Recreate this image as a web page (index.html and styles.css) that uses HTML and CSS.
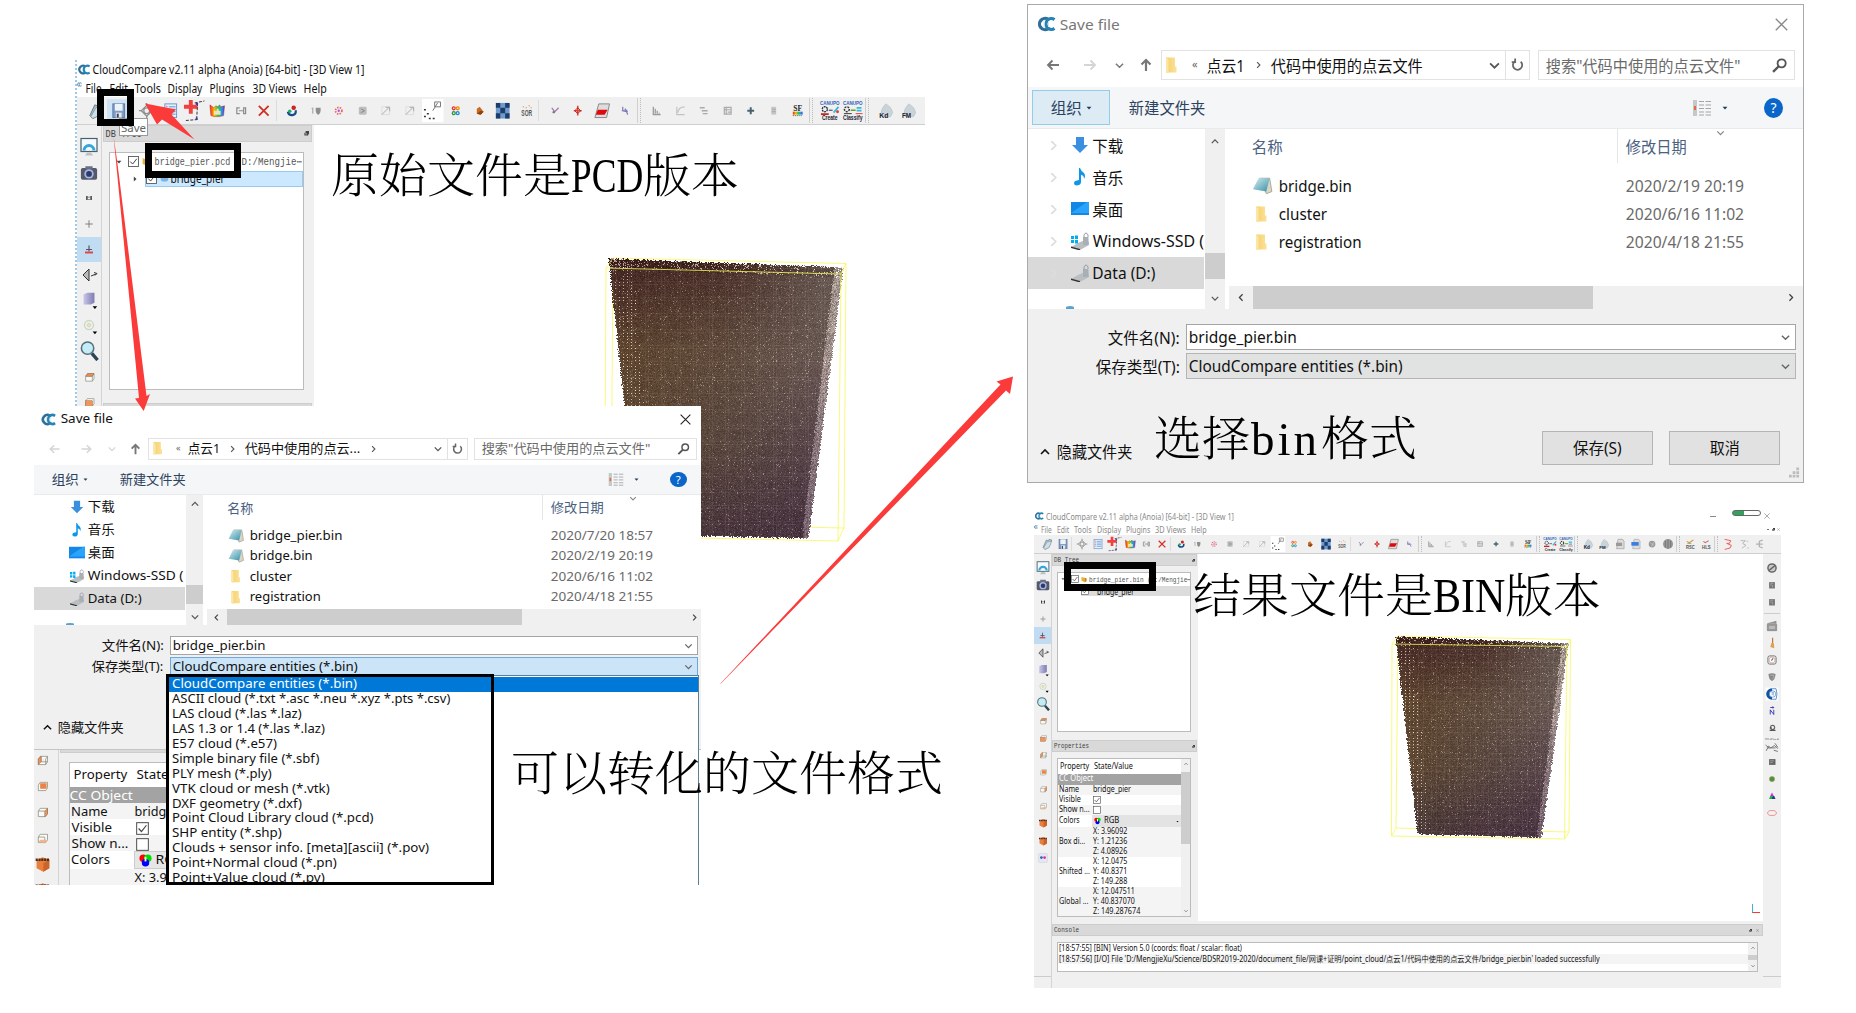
FILE: index.html
```html
<!DOCTYPE html>
<html lang="zh-CN">
<head>
<meta charset="utf-8">
<title>CloudCompare: PCD → BIN</title>
<link rel="stylesheet" href="styles.css">
</head>
<body>
<svg class="paints" aria-hidden="true">
  <defs>
    <linearGradient id="gTeal" x1="0" y1="0" x2="1" y2="1"><stop offset="0" stop-color="#d3eef2"/><stop offset="1" stop-color="#3a8fa5"/></linearGradient>
    <linearGradient id="gFold" x1="0" y1="0" x2="1" y2="0"><stop offset="0" stop-color="#f6d06a"/><stop offset="1" stop-color="#fbe29a"/></linearGradient>
    <linearGradient id="gRain" x1="0" y1="0" x2="1" y2="0"><stop offset="0" stop-color="#e22"/><stop offset=".3" stop-color="#fb0"/><stop offset=".55" stop-color="#2c4"/><stop offset=".8" stop-color="#29e"/><stop offset="1" stop-color="#63c"/></linearGradient>
    <linearGradient id="gCube" x1="0" y1="0" x2="1" y2="0"><stop offset="0" stop-color="#c9c6ea"/><stop offset="1" stop-color="#7f7bb0"/></linearGradient>
  </defs>
</svg>
<svg class="sprite" aria-hidden="true">
  <symbol id="cc" viewBox="0 0 18 16"><g fill="none" stroke-width="3.200"><path d="M10 3.200A5.600 5.600 0 1 0 10 12.800" stroke="#2f6f9a"/><path d="M16.500 3.600A5.400 5.400 0 1 0 16.500 12.400" stroke="#2583b5"/></g><path d="M6 4v8M10.500 5v6" stroke="#d5e8f2" stroke-width="1"/></symbol>
  <symbol id="open" viewBox="0 0 24 24"><path d="M6 17L11 6l3 1 1-2 4 1-4 11-6 3z" fill="#aebfc8" stroke="#69818e"/><path d="M7 18l5-9 7-1-4 9-6 3z" fill="#cfe0e8" stroke="#7b919c" stroke-width=".8"/></symbol>
  <symbol id="save" viewBox="0 0 24 24"><rect x="6" y="5" width="12" height="14" fill="#7f9cc2" stroke="#5c7ba6"/><rect x="8" y="5" width="8" height="7" fill="#eef3f9"/><rect x="9" y="14" width="6" height="5" fill="#e8eaee"/><rect x="10" y="15" width="2" height="4" fill="#445"/></symbol>
  <symbol id="gear" viewBox="0 0 24 24"><g fill="none" stroke="#8c8c8c" stroke-width="1.300"><path d="M12 6.500l5.500 5.500-5.500 5.500L6.500 12z"/><circle cx="12" cy="12" r="3"/><path d="M12 4v3M12 17v3M4 12h3M17 12h3"/></g></symbol>
  <symbol id="list" viewBox="0 0 24 24"><rect x="6" y="5" width="12" height="14" fill="#e7f1fb" stroke="#6b97cd"/><path d="M10 8h7M10 10.500h7M10 13h7M10 15.500h7" stroke="#5b8fd0"/><path d="M8 7v10" stroke="#d55" stroke-dasharray="1.500 1"/></symbol>
  <symbol id="plus" viewBox="0 0 24 24"><path d="M9 1v14M2 8h14" stroke="#f04040" stroke-width="4"/><path d="M13 4l10-2M16 4l-1 17M4 22l12-1" fill="none" stroke="#333" stroke-dasharray="3 1.500"/><rect x="14" y="4" width="2" height="2" fill="#33c"/><rect x="14" y="19" width="2" height="2" fill="#33c"/></symbol>
  <symbol id="rain" viewBox="0 0 24 24"><path d="M5 6l4 3 2-2 2 1 2-2 1 2 4-1-1 10-4 1H9l-3-1z" fill="url(#gRain)" stroke="#a33" stroke-width=".5"/><path d="M9 12h3v-2h2v2h2v4H9z" fill="#f3e2b8"/></symbol>
  <symbol id="link" viewBox="0 0 24 24"><path d="M11 9H8v6h3M10 12h5M15 9v6h2V9z" fill="none" stroke="#8a8a8a" stroke-width="1.200"/></symbol>
  <symbol id="del" viewBox="0 0 24 24"><path d="M7 7l10 10M17 7L7 17" stroke="#d03226" stroke-width="1.900"/></symbol>
  <symbol id="dots3" viewBox="0 0 24 24"><path d="M8 13q1 4 5 3.500 4-1 3-5" fill="none" stroke="#124a8a" stroke-width="2.200"/><circle cx="14" cy="9" r="2.300" fill="#c22"/><circle cx="10" cy="12.500" r="1.800" fill="#2a6"/></symbol>
  <symbol id="shield" viewBox="0 0 24 24"><path d="M9 9v6M8 10l1-1" stroke="#999" stroke-width="1"/><path d="M12 9h5v3q0 3-2.500 4.500Q12 15 12 12z" fill="#8e8e8e"/></symbol>
  <symbol id="spots" viewBox="0 0 24 24"><circle cx="12" cy="12" r="3.300" fill="none" stroke="#e66" stroke-width="1.800" stroke-dasharray="1.500 1.200"/><circle cx="12" cy="12" r="1.200" fill="#a5d"/></symbol>
  <symbol id="gbox" viewBox="0 0 24 24"><rect x="8" y="8" width="8" height="8" rx="1.500" fill="#bdbdbd"/><path d="M10 10l4 2-4 2" fill="none" stroke="#8a8a8a"/></symbol>
  <symbol id="garrow" viewBox="0 0 24 24"><rect x="8" y="8" width="8" height="8" fill="none" stroke="#dedede"/><path d="M8 16l7-7M12 8.500h4v4" fill="none" stroke="#aaa"/></symbol>
  <symbol id="seg" viewBox="0 0 24 24"><rect x="1" y="0" width="22" height="24" fill="#fff"/><path d="M12 12L17 4M14 3h6v5h-6z" fill="none" stroke="#777"/><path d="M3 11h2M6 15h2M3 18h2M8 20h2M12 20h2" stroke="#333" stroke-width="1.500"/></symbol>
  <symbol id="gccc" viewBox="0 0 24 24"><g fill="none" stroke-width="1.300"><circle cx="10" cy="9.500" r="1.500" stroke="#e33"/><circle cx="14" cy="9.500" r="1.500" stroke="#e80"/><circle cx="10" cy="14.500" r="1.500" stroke="#294"/><circle cx="14" cy="14.500" r="1.500" stroke="#28c"/></g></symbol>
  <symbol id="blob" viewBox="0 0 24 24"><path d="M9 15V10l3-2 4 5-3 3z" fill="#c96a1e"/><path d="M9 15l4-3 3 1-3 3z" fill="#8e430d"/></symbol>
  <symbol id="check" viewBox="0 0 24 24"><rect x="5" y="4" width="14" height="16" fill="#6f9ad0"/><path d="M5 4h4.500v5H5zM14.500 4H19v5h-4.500zM9.500 9h5v5.500h-5zM5 14.500h4.500V20H5zM14.500 14.500H19V20h-4.500z" fill="#1d3c66"/></symbol>
  <symbol id="fmtSor" viewBox="0 0 24 24"><text x="6.500" y="17.500" class="ic-bold ic-soft" textLength="11" lengthAdjust="spacingAndGlyphs" font-size="8.500">SOR</text><path d="M8 8h1M11 9h1M14 7h1M16 9h1" stroke="#d62"/></symbol>
  <symbol id="cut" viewBox="0 0 24 24"><path d="M9 9l3 4 4-4" fill="none" stroke="#a27db0" stroke-width="1.300"/><circle cx="11" cy="13.500" r="1.200" fill="#777"/></symbol>
  <symbol id="move" viewBox="0 0 24 24"><path d="M12 7v10M8 12h8" stroke="#d43" stroke-width="1.600"/><path d="M12 9l3 3-3 3-3-3z" fill="none" stroke="#b22"/></symbol>
  <symbol id="slab" viewBox="0 0 24 24"><path d="M9 5h11l-3 14H5z" fill="#ddd" stroke="#888"/><path d="M8 11h10l-3 5H6z" fill="#e00808"/></symbol>
  <symbol id="trace" viewBox="0 0 24 24"><path d="M10 8v4l4 1 1 3M9 12h4M12 10l3 3" fill="none" stroke="#7878b8" stroke-width="1.200"/></symbol>
  <symbol id="hist" viewBox="0 0 24 24"><path d="M8.500 8v8h7.500M10.500 15v-5M12.500 15v-3M14.500 15v-1" fill="none" stroke="#999" stroke-width="1.300"/></symbol>
  <symbol id="curve" viewBox="0 0 24 24"><path d="M8 8v8h8M9 14q1-6 7-6" fill="none" stroke="#c2c2c2" stroke-width="1.200"/></symbol>
  <symbol id="eq" viewBox="0 0 24 24"><path d="M8 9h5M10 12h6M11 15h5" stroke="#aaa" stroke-width="1.400"/></symbol>
  <symbol id="grid" viewBox="0 0 24 24"><path d="M8.500 8.500h7v7h-7zM8 11h8M10.500 8v8M12 13.500h4" fill="none" stroke="#aaa" stroke-width="1.200"/></symbol>
  <symbol id="pl" viewBox="0 0 24 24"><path d="M12 8.500v7M8.500 12h7" stroke="#45616e" stroke-width="2"/></symbol>
  <symbol id="calc" viewBox="0 0 24 24"><rect x="9.500" y="8" width="5" height="8" fill="#c6c6c6"/><path d="M10 10.500h4M10 13h4" stroke="#aaa"/></symbol>
  <symbol id="sf" viewBox="0 0 24 24"><text x="7.500" y="12" class="ic-serif" textLength="9" lengthAdjust="spacingAndGlyphs" font-size="8">SF</text><rect x="7" y="13" width="10" height="3" fill="url(#gRain)"/><path d="M7 17h10" stroke="#555" stroke-dasharray="1 1"/></symbol>
  <symbol id="canC" viewBox="0 0 24 24"><text x="2" y="6" class="ic-blue" textLength="20" lengthAdjust="spacingAndGlyphs" font-size="5.500">CANUPO</text><circle cx="7" cy="10.500" r="2.600" fill="none" stroke="#234" stroke-width="1.400" stroke-dasharray="2 .7"/><path d="M3 15.500h8" stroke="#c22" stroke-width="2"/><path d="M11 11.500h4" stroke="#234"/><path d="M16 14l5-6" stroke="#3bd" stroke-width="1.800"/><circle cx="20" cy="13" r="1.500" fill="#e33"/><text x="4" y="22" class="ic-bold" textLength="16" lengthAdjust="spacingAndGlyphs" font-size="6.500">Create</text></symbol>
  <symbol id="canY" viewBox="0 0 24 24"><text x="2" y="6" class="ic-blue" textLength="20" lengthAdjust="spacingAndGlyphs" font-size="5.500">CANUPO</text><circle cx="6" cy="10.500" r="2.500" fill="none" stroke="#333" stroke-width="1.500" stroke-dasharray="2 1"/><path d="M3 15h8" stroke="#333"/><path d="M10 11.500h5" stroke="#5a2" stroke-width="1.500"/><path d="M16 9h5M16 12h5" stroke="#3bd" stroke-width="1.800"/><path d="M15 15h7" stroke="#e33"/><text x="2" y="22" class="ic-bold" textLength="20" lengthAdjust="spacingAndGlyphs" font-size="6.500">Classify</text></symbol>
  <symbol id="kd" viewBox="0 0 24 24"><path d="M7 16q0-6 5-11 6 3 7 9l-2 4H9z" fill="#c9d4d8" stroke="#b4c0c5" stroke-width=".7"/><text x="5.500" y="19" class="ic-bold" font-size="7">Kd</text></symbol>
  <symbol id="fm" viewBox="0 0 24 24"><path d="M7 16q0-6 5-11 6 3 7 9l-2 4H9z" fill="#c9d4d8" stroke="#b4c0c5" stroke-width=".7"/><text x="5" y="19" class="ic-bold" font-size="6.500">FM</text></symbol>
  <symbol id="docg" viewBox="0 0 24 24"><path d="M9 5h7l2 3v11H7z" fill="#ddd" stroke="#999"/><rect x="6" y="10" width="9" height="5" fill="#999"/></symbol>
  <symbol id="docb" viewBox="0 0 24 24"><path d="M9 5h7l2 3v11H7z" fill="#ddd" stroke="#aaa"/><rect x="5" y="9" width="11" height="5.500" fill="#3a7fe0"/></symbol>
  <symbol id="ball" viewBox="0 0 24 24"><circle cx="12" cy="12" r="5" fill="#9a9a9a"/><path d="M9 10l6 4M15 9l-4 7" stroke="#ccc"/></symbol>
  <symbol id="globe" viewBox="0 0 24 24"><circle cx="12" cy="12" r="7.500" fill="#999"/><path d="M12 5v14M8 7v10M16 7v10" stroke="#666"/></symbol>
  <symbol id="rc" viewBox="0 0 24 24"><text x="6" y="19" class="ic-bold ic-soft" font-size="9" textLength="13" lengthAdjust="spacingAndGlyphs">RSC</text><path d="M7 8l4 2 6-4" fill="none" stroke="#e83" stroke-width="1.500"/><path d="M8 11h6" stroke="#3a4"/></symbol>
  <symbol id="rl" viewBox="0 0 24 24"><text x="6" y="19" class="ic-bold ic-soft" font-size="9" textLength="13" lengthAdjust="spacingAndGlyphs">HLS</text><path d="M8 8l3 2 5-3" fill="none" stroke="#c66" stroke-width="1.500"/></symbol>
  <symbol id="sred" viewBox="0 0 24 24"><path d="M7 5l9 2-2 4-4 0 7 3-2 4-8 2" fill="none" stroke="#e55" stroke-width="1.400"/></symbol>
  <symbol id="sgray" viewBox="0 0 24 24"><path d="M7 7h7l-4 4 5 3-6 4M17 18h2M16 8h2" fill="none" stroke="#b5b5b5" stroke-width="1.400"/></symbol>
  <symbol id="tri" viewBox="0 0 24 24"><path d="M16 6l-5 2v8l5 2M6 12h10" fill="none" stroke="#b0b0b0" stroke-width="1.800"/></symbol>

  <symbol id="mon" viewBox="3 2 18 19"><rect x="4" y="3" width="16" height="13" fill="#f4fafe" stroke="#45606e" stroke-width="1.200"/><path d="M7 15a5 5 0 0 1 10 0" fill="none" stroke="#35a5dc" stroke-width="3"/><path d="M10 17h4l2 3H8z" fill="#b9c1c5"/></symbol>
  <symbol id="cam" viewBox="2 2 20 19"><rect x="3" y="6" width="18" height="13" rx="2" fill="#55596c"/><rect x="8" y="4" width="8" height="3" fill="#6b6f84"/><circle cx="12" cy="12.500" r="5.200" fill="#a9b6dd"/><circle cx="12" cy="12.500" r="3.200" fill="#2b3a6e"/></symbol>
  <symbol id="one" viewBox="0 0 24 24"><path d="M9.500 9.500v5M14.500 9.500v5M12 10.500v1M12 13.500v1" stroke="#333" stroke-width="1.700"/></symbol>
  <symbol id="cross" viewBox="0 0 24 24"><path d="M12 7.500v9M7.500 12h9" stroke="#777" stroke-width="1.100"/></symbol>
  <symbol id="auto" viewBox="0 0 24 24"><path d="M12 8v6M9 12h6" stroke="#556" stroke-width="1.200"/><path d="M8 15h8" stroke="#e04848" stroke-width="2"/></symbol>
  <symbol id="eye" viewBox="1 2 20 20"><path d="M11 6v12L5 12z" fill="#bbb" stroke="#333"/><path d="M13 13l5-2M16 9.500l3 1-2 2" fill="none" stroke="#333"/></symbol>
  <symbol id="cube" viewBox="1 2 22 22"><path d="M6 7l4-2h8v11l-4 2H6z" fill="url(#gCube)"/><path d="M16 20h5l-2.500 3z" fill="#000"/></symbol>
  <symbol id="atom" viewBox="1 1 22 22"><circle cx="12" cy="11" r="5" fill="none" stroke="#c3ddc3" stroke-width="1.500"/><circle cx="12" cy="11" r="2" fill="#f2e3a2" stroke="#dcc"/><path d="M16 18h5l-2.500 3z" fill="#000"/></symbol>
  <symbol id="mag" viewBox="2 2 20 21"><path d="M15 15l6 7" stroke="#2d4454" stroke-width="3.500"/><circle cx="10.500" cy="9.500" r="6.500" fill="#c3ecf4" stroke="#55707c" stroke-width="1.600"/></symbol>
  <symbol id="b1" viewBox="0 0 24 24"><path d="M8 11h8v6H8zM10 8h8v6l-2 3" fill="#fafafa" stroke="#887" stroke-width=".8"/><path d="M8 11l2-3h8l-2 3z" fill="#f0955a" stroke="#964" stroke-width=".8"/></symbol>
  <symbol id="b2" viewBox="0 0 24 24"><path d="M10 8h8v6l-2 3H8v-6z" fill="#fafafa" stroke="#887" stroke-width=".8"/><rect x="8" y="10.500" width="8" height="7" fill="#f0955a" stroke="#964" stroke-width=".6"/></symbol>
  <symbol id="b3" viewBox="0 0 24 24"><path d="M10 8h8v6l-2 3H8v-6zM11 8v6h7M16 17V11l2-3" fill="#fafafa" stroke="#887" stroke-width=".8"/><path d="M8 11l3-3v6l-3 3z" fill="#f0955a" stroke="#964" stroke-width=".6"/></symbol>
  <symbol id="b4" viewBox="0 0 24 24"><path d="M10 8h8v6l-2 3H8v-6z" fill="#fafafa" stroke="#887" stroke-width=".8"/><rect x="10" y="9" width="7" height="6" fill="#e98346"/></symbol>
  <symbol id="b5" viewBox="0 0 24 24"><path d="M10 8h8v6l-2 3H8v-6zM8 11h7" fill="#fafafa" stroke="#887" stroke-width=".8"/><path d="M15 11l3-3v6l-3 3z" fill="#f0955a" stroke="#964" stroke-width=".6"/></symbol>
  <symbol id="b6" viewBox="0 0 24 24"><path d="M10 8h8v6l-2 3H8v-6zM8 11h7v5" fill="#fafafa" stroke="#887" stroke-width=".8"/><path d="M8 17l2-3h8l-2 3z" fill="#f4b58c"/></symbol>
  <symbol id="bf" viewBox="2 2 20 20"><path d="M5 8l7-4 8 3v10l-7 4-8-4z" fill="#e8803c"/><path d="M13 11v10l7-4V7z" fill="#c9652a"/><path d="M4 7h16" stroke="#4b2a1a" stroke-width="3" stroke-dasharray="2.500 .8"/></symbol>
  <symbol id="flick" viewBox="1 2 22 22"><rect x="2" y="3" width="20" height="20" rx="3" fill="#e2e7f2" stroke="#c6cede"/><circle cx="8.500" cy="12" r="3" fill="#2f5fd0"/><circle cx="15.500" cy="12" r="3" fill="#e8307a"/></symbol>

  <symbol id="no" viewBox="0 0 24 24"><circle cx="12" cy="12" r="7" fill="#ccc" stroke="#666" stroke-width="2.500"/><path d="M7 16l10-8" stroke="#666" stroke-width="2.500"/></symbol>
  <symbol id="qb" viewBox="0 0 24 24"><rect x="7" y="7" width="10" height="11" fill="#777"/><path d="M9 9h5M9 12h3M13 12v4" stroke="#bbb"/></symbol>
  <symbol id="film" viewBox="0 0 24 24"><path d="M4 8l15-4v4M4 9h16v11H4z" fill="#999" stroke="#777"/><rect x="7" y="12" width="10" height="5" fill="#bbb"/></symbol>
  <symbol id="broom" viewBox="0 0 24 24"><path d="M13 3v9" stroke="#b67a35" stroke-width="2"/><path d="M11 12h4l1 9-7-2z" fill="#e0a050"/></symbol>
  <symbol id="comp" viewBox="0 0 24 24"><rect x="5" y="5" width="14" height="14" rx="3" fill="#eee" stroke="#666" stroke-width="1.500"/><circle cx="12" cy="12" r="5" fill="#fff" stroke="#999"/><path d="M11 13l3-4" stroke="#d33" stroke-width="1.800"/></symbol>
  <symbol id="shd" viewBox="0 0 24 24"><path d="M6 7q6-3 12 0 0 9-6 12Q6 16 6 7z" fill="#888"/><path d="M9 9h6v4l-3 3" fill="none" stroke="#ccc"/></symbol>
  <symbol id="csf" viewBox="0 0 24 24"><rect x="1" y="1" width="22" height="22" fill="#fff"/><path d="M12 3h7q3 9 0 18h-7" fill="#fff" stroke="#4a86cc" stroke-width="1.500"/><path d="M12 2a10 10 0 0 0 0 20z" fill="#1552a0"/><circle cx="13" cy="12" r="5.500" fill="#fff" stroke="#4a86cc" stroke-width="1.200"/><path d="M11 9h4M11 12h4M14 9v6" fill="none" stroke="#4a86cc"/></symbol>
  <symbol id="nn" viewBox="0 0 24 24"><path d="M9 18v-8l6 8v-8M9 6h6M13 4l2 2-2 2" fill="none" stroke="#3838b0" stroke-width="1.600"/></symbol>
  <symbol id="pz" viewBox="0 0 24 24"><circle cx="13" cy="11" r="3.500" fill="none" stroke="#666" stroke-width="2"/><path d="M8 16h10M8 12h4" stroke="#555" stroke-width="2"/></symbol>
  <symbol id="m3" viewBox="0 0 24 24"><text x="-1" y="4" font-size="9" textLength="26" lengthAdjust="spacingAndGlyphs" class="ic-grey">M3C2</text><path d="M2 22l4-8 4 3 6-4 6 5M1 12l6 5M17 9l5 7M15 21l7 2M4 17h14" fill="none" stroke="#777" stroke-width="1.700"/></symbol>
  <symbol id="pc" viewBox="0 0 24 24"><rect x="7" y="7" width="11" height="10" fill="#666"/><path d="M9 10h6M9 13h4" stroke="#ccc"/></symbol>
  <symbol id="gs" viewBox="0 0 24 24"><circle cx="12" cy="12" r="4.500" fill="#4a9440" stroke="#a95"/></symbol>
  <symbol id="rgbt" viewBox="0 0 24 24"><path d="M12 6l3 6H9z" fill="#b3d"/><path d="M9 12h4l-2 5H7z" fill="#2a4"/><path d="M13 12h3l2 5h-7z" fill="#247"/></symbol>
  <symbol id="ell" viewBox="0 0 24 24"><ellipse cx="12" cy="12" rx="7.500" ry="4.300" fill="none" stroke="#e77" stroke-width="1.300"/></symbol>

  <symbol id="aL" viewBox="0 0 14 12"><path d="M13 6H2M6.500 1.500L2 6l4.500 4.500" fill="none" stroke="currentColor" stroke-width="1.900"/></symbol>
  <symbol id="aR" viewBox="0 0 14 12"><path d="M1 6h11M7.500 1.500L12 6l-4.500 4.500" fill="none" stroke="currentColor" stroke-width="1.900"/></symbol>
  <symbol id="aU" viewBox="0 0 12 14"><path d="M6 13V2M1.500 6.500L6 2l4.500 4.500" fill="none" stroke="currentColor" stroke-width="2.200"/></symbol>
  <symbol id="cD" viewBox="0 0 10 10"><path d="M1 3l4 4 4-4" fill="none" stroke="currentColor" stroke-width="1.600"/></symbol>
  <symbol id="cU" viewBox="0 0 10 10"><path d="M1 7l4-4 4 4" fill="none" stroke="currentColor" stroke-width="1.600"/></symbol>
  <symbol id="cR" viewBox="0 0 10 10"><path d="M3 1l4 4-4 4" fill="none" stroke="currentColor" stroke-width="1.600"/></symbol>
  <symbol id="cL" viewBox="0 0 10 10"><path d="M7 1L3 5l4 4" fill="none" stroke="currentColor" stroke-width="1.600"/></symbol>
  <symbol id="tD" viewBox="0 0 10 10"><path d="M1 3h8L5 7.500z" fill="currentColor"/></symbol>
  <symbol id="tR" viewBox="0 0 10 10"><path d="M3 1v8L7.500 5z" fill="currentColor"/></symbol>
  <symbol id="ref" viewBox="0 0 14 14"><path d="M10.500 3.500A5 5 0 1 1 4 3.200M4.500 0v3.800H.8" fill="none" stroke="#666" stroke-width="1.900"/></symbol>
  <symbol id="find" viewBox="0 0 14 14"><circle cx="9" cy="5" r="3.800" fill="none" stroke="#555" stroke-width="1.700"/><path d="M6.300 7.700L1 13" stroke="#555" stroke-width="2.200"/></symbol>
  <symbol id="x" viewBox="0 0 12 12"><path d="M.7.7l10.600 10.600M11.300.7L.7 11.300" stroke="currentColor" stroke-width="1.200"/></symbol>
  <symbol id="fold" viewBox="0 0 11 16"><path d="M0 0h9v9h1.500v6H0z" fill="url(#gFold)"/><path d="M0 0l2.500 2v14L0 15z" fill="#fce6a6"/></symbol>
  <symbol id="bin" viewBox="0 0 18 16"><path d="M6 1h9l2 12-5 2z" fill="#d9d6c4" stroke="#8b8b80" stroke-width=".6"/><path d="M5 1h10l-3 12L0 11z" fill="url(#gTeal)"/></symbol>
  <symbol id="dl" viewBox="0 0 16 18"><path d="M4 1h8v8h4l-8 8-8-8h4z" fill="#3a8fe0"/></symbol>
  <symbol id="mus" viewBox="0 0 16 18"><path d="M8 0q1 3 4 5 2 3 0 6 0-4-3-4v7q0 3-4 3.500Q2 17 2 15q0-2.500 5-3V0z" fill="#0e97e8"/></symbol>
  <symbol id="desk" viewBox="0 0 18 14"><rect width="18" height="13" fill="#1287e6"/><path d="M0 11L16 0h2v11H0z" fill="#2aa3fb"/></symbol>
  <symbol id="win" viewBox="0 0 18 18"><path d="M7 11l7-3 4 2v3l-9 5-9-3z" fill="#b9bec2"/><path d="M0 14.500l9 2.500v1.500l-9-2.500z" fill="#333"/><path d="M0 4h3v3H0zM4 3.500h3V7H4zM0 8h3v3H0zM4 8h3v3.500H4z" fill="#00adef"/><rect x="12" y="5" width="5.500" height="8" rx="1" fill="#a9afb5"/><path d="M13 6V3q2-4 4 0v2" fill="none" stroke="#99a"/></symbol>
  <symbol id="drv" viewBox="0 0 18 18"><path d="M7 11l7-3 4 2v3l-9 5-9-3z" fill="#b9bec2"/><path d="M0 14.500l9 2.500v1.500l-9-2.500z" fill="#333"/><rect x="12" y="5" width="5.500" height="8" rx="1" fill="#a9afb5"/><path d="M13 6V3q2-4 4 0v2" fill="none" stroke="#99a"/></symbol>
  <symbol id="view" viewBox="0 0 18 16"><rect x="0" y="0" width="4" height="16" fill="#c3c9c6"/><path d="M2 6v4" stroke="#e06a4a" stroke-width="2"/><path d="M6 1.500h5M12.500 1.500H18M6 5h5M12.500 5H18M6 8.500h5M12.500 8.500H18M6 12h5M12.500 12H18M6 15h5M12.500 15H18" stroke="#a2a6aa" stroke-width="1.100"/></symbol>
  <symbol id="rgb" viewBox="0 0 14 14"><circle cx="4.500" cy="4.500" r="4" fill="#f00"/><circle cx="9.500" cy="4.500" r="4" fill="#0d0"/><circle cx="7" cy="9.500" r="4" fill="#00f"/><path d="M7 3v5" stroke="#ffa" stroke-width="2"/></symbol>
  <symbol id="tick" viewBox="0 0 10 10"><rect x=".5" y=".5" width="9" height="9" fill="#fff" stroke="#555" stroke-width=".8"/><path d="M2 5l2.200 2.300L8 2.500" fill="none" stroke="#444" stroke-width=".9"/></symbol>
  <symbol id="untick" viewBox="0 0 10 10"><rect x=".5" y=".5" width="9" height="9" fill="#fff" stroke="#555" stroke-width=".8"/></symbol>
  <symbol id="float" viewBox="0 0 6 6"><path d="M2 0h4v4H5v1.500H.5V2H2z" fill="#444"/><path d="M1.500 3.500h2" stroke="#ddd"/></symbol>
  <symbol id="fol2" viewBox="0 0 14 14"><path d="M1 1l7 2v10l-7-3z" fill="#e8b030"/><path d="M8 3l5 1v7l-5 3z" fill="#c8860a"/></symbol>
  <symbol id="cld" viewBox="0 0 14 14"><ellipse cx="7" cy="7" rx="6" ry="4" fill="#7fb2e0"/></symbol>
</svg>

<main class="stage">

  <section class="app app-a">
    <header class="app-title"><svg><use href="#cc"/></svg><span data-w="272">CloudCompare v2.11 alpha (Anoia) [64-bit] - [3D View 1]</span></header>
    <nav class="menu"><svg><use href="#cc"/></svg><span data-w="16">File</span><span data-w="18">Edit</span><span data-w="26">Tools</span><span data-w="35">Display</span><span data-w="35">Plugins</span><span data-w="44">3D Views</span><span data-w="23">Help</span></nav>
    <div class="tools" data-icons="open save.hot | gear list plus rain link del | dots3 shield spots gbox garrow garrow seg gccc blob check fmtSor | cut move slab trace || hist curve eq grid pl calc sf || canC canY || kd fm"></div>
    <div class="work">
      <div class="side" data-icons="mon cam one cross auto.on eye cube atom mag b1 b2"></div>
      <div class="dock">
        <div class="dock-head"><span data-w="36">DB Tree</span><svg><use href="#float"/></svg></div>
        <div class="tree">
          <div class="node"><svg class="tw"><use href="#tD"/></svg><svg class="cb"><use href="#tick"/></svg><svg class="fo"><use href="#fol2"/></svg><span data-w="76">bridge_pier.pcd</span><span class="path" data-w="60">D:/Mengjie⋯</span></div>
          <div class="node child"><svg class="tw"><use href="#tR"/></svg><div class="sel"><svg class="cb"><use href="#tick"/></svg><svg class="fo"><use href="#cld"/></svg><span data-w="54">bridge_pier</span></div></div>
        </div>
        <div class="dock-head"></div>
      </div>
      <div class="view3d"></div>
    </div>
  </section>
  <canvas class="pier pier-a" width="246" height="290"></canvas>

  <section class="lower">
    <div class="side" data-icons="b3 b4 b5 b6 bf bf"></div>
    <div class="dock">
      <div class="dock-head"></div>
      <div class="props">
        <div class="prow ph"><span data-w="54">Property</span><span data-w="72">State/Value</span></div>
        <div class="prow pc"><span data-w="63">CC Object</span></div>
        <div class="prow alt"><span data-w="37">Name</span><span data-w="68">bridge_pier</span></div>
        <div class="prow"><span data-w="40">Visible</span><svg class="cb"><use href="#tick"/></svg></div>
        <div class="prow alt"><span data-w="57">Show n...</span><svg class="cb"><use href="#untick"/></svg></div>
        <div class="prow tall"><span data-w="39">Colors</span><div class="combo"><svg><use href="#rgb"/></svg><span data-w="28">RGB</span></div></div>
        <div class="prow alt"><span></span><span data-w="62">X: 3.96092</span></div>
      </div>
    </div>
  </section>

  <section class="dialog d1">
    <header class="dt"><svg class="logo"><use href="#cc"/></svg><span data-w="52">Save file</span><svg class="close"><use href="#x"/></svg></header>
    <div class="nav">
      <div class="nb dim"><svg><use href="#aL"/></svg></div><div class="nb dim"><svg><use href="#aR"/></svg></div><div class="nb nv dim"><svg class="s"><use href="#cD"/></svg></div><div class="nb nu"><svg class="u"><use href="#aU"/></svg></div>
      <div class="addr"><svg class="fold"><use href="#fold"/></svg><span class="qq">«</span><span data-w="32">点云1</span><svg class="s"><use href="#cR"/></svg><span data-w="115">代码中使用的点云...</span><svg class="s"><use href="#cR"/></svg><svg class="s drop"><use href="#cD"/></svg></div>
      <div class="refresh"><svg><use href="#ref"/></svg></div>
      <div class="search"><span data-w="169">搜索"代码中使用的点云文件"</span><svg><use href="#find"/></svg></div>
    </div>
    <div class="cmd"><div class="org"><span data-w="27">组织</span><svg><use href="#tD"/></svg></div><span class="newf" data-w="66">新建文件夹</span><svg class="vw"><use href="#view"/></svg><svg class="vd"><use href="#tD"/></svg><span class="help">?</span></div>
    <div class="body">
      <div class="places">
        <div><svg><use href="#dl"/></svg><span data-w="27">下载</span></div><div><svg><use href="#mus"/></svg><span data-w="27">音乐</span></div><div><svg><use href="#desk"/></svg><span data-w="27">桌面</span></div><div><svg><use href="#win"/></svg><span data-w="96">Windows-SSD (</span></div><div class="cur"><svg><use href="#drv"/></svg><span data-w="54">Data (D:)</span></div>
        <i class="peek"></i>
      </div>
      <div class="vs"><svg><use href="#cU"/></svg><i></i><svg><use href="#cD"/></svg></div>
      <div class="files">
        <div class="fh"><span class="n"><span data-w="26">名称</span></span><span class="d"><span data-w="53">修改日期</span><svg><use href="#cD"/></svg></span></div>
        <div class="fr"><svg><use href="#bin"/></svg><span class="n"><span data-w="93">bridge_pier.bin</span></span><span class="d"><span data-w="102">2020/7/20 18:57</span></span></div>
        <div class="fr"><svg><use href="#bin"/></svg><span class="n"><span data-w="63">bridge.bin</span></span><span class="d"><span data-w="102">2020/2/19 20:19</span></span></div>
        <div class="fr"><svg class="f"><use href="#fold"/></svg><span class="n"><span data-w="42">cluster</span></span><span class="d"><span data-w="102">2020/6/16 11:02</span></span></div>
        <div class="fr"><svg class="f"><use href="#fold"/></svg><span class="n"><span data-w="71">registration</span></span><span class="d"><span data-w="102">2020/4/18 21:55</span></span></div>
        <div class="hs"><svg><use href="#cL"/></svg><i></i><svg><use href="#cR"/></svg></div>
      </div>
    </div>
    <div class="foot">
      <div class="field"><label data-w="62">文件名(N):</label><div class="inp"><span data-w="93">bridge_pier.bin</span><svg><use href="#cD"/></svg></div></div>
      <div class="field"><label data-w="72">保存类型(T):</label><div class="inp type"><span data-w="185">CloudCompare entities (*.bin)</span><svg><use href="#cD"/></svg></div></div>
      <div class="acts"><svg><use href="#cU"/></svg><span data-w="66">隐藏文件夹</span></div>
    </div>
  </section>

  <ul class="types">
    <li class="cur"><span data-w="185">CloudCompare entities (*.bin)</span></li>
    <li><span data-w="278">ASCII cloud (*.txt *.asc *.neu *.xyz *.pts *.csv)</span></li>
    <li><span data-w="130">LAS cloud (*.las *.laz)</span></li>
    <li><span data-w="153">LAS 1.3 or 1.4 (*.las *.laz)</span></li>
    <li><span data-w="105">E57 cloud (*.e57)</span></li>
    <li><span data-w="147">Simple binary file (*.sbf)</span></li>
    <li><span data-w="100">PLY mesh (*.ply)</span></li>
    <li><span data-w="158">VTK cloud or mesh (*.vtk)</span></li>
    <li><span data-w="130">DXF geometry (*.dxf)</span></li>
    <li><span data-w="202">Point Cloud Library cloud (*.pcd)</span></li>
    <li><span data-w="110">SHP entity (*.shp)</span></li>
    <li><span data-w="257">Clouds + sensor info. [meta][ascii] (*.pov)</span></li>
    <li><span data-w="165">Point+Normal cloud (*.pn)</span></li>
    <li><span data-w="153">Point+Value cloud (*.pv)</span></li>
  </ul>

  <section class="dialog d2">
    <header class="dt"><svg class="logo"><use href="#cc"/></svg><span data-w="60">Save file</span><svg class="close"><use href="#x"/></svg></header>
    <div class="nav">
      <div class="nb"><svg><use href="#aL"/></svg></div><div class="nb dim"><svg><use href="#aR"/></svg></div><div class="nb nv"><svg class="s"><use href="#cD"/></svg></div><div class="nb nu"><svg class="u"><use href="#aU"/></svg></div>
      <div class="addr"><svg class="fold"><use href="#fold"/></svg><span class="qq">«</span><span data-w="38">点云1</span><svg class="s"><use href="#cR"/></svg><span data-w="152">代码中使用的点云文件</span><svg class="s drop"><use href="#cD"/></svg></div>
      <div class="refresh"><svg><use href="#ref"/></svg></div>
      <div class="search"><span data-w="195">搜索"代码中使用的点云文件"</span><svg><use href="#find"/></svg></div>
    </div>
    <div class="cmd"><div class="org"><span data-w="31">组织</span><svg><use href="#tD"/></svg></div><span class="newf" data-w="77">新建文件夹</span><svg class="vw"><use href="#view"/></svg><svg class="vd"><use href="#tD"/></svg><span class="help">?</span></div>
    <div class="body">
      <div class="places">
        <div><svg class="ex"><use href="#cR"/></svg><svg><use href="#dl"/></svg><span data-w="31">下载</span></div><div><svg class="ex"><use href="#cR"/></svg><svg><use href="#mus"/></svg><span data-w="31">音乐</span></div><div><svg class="ex"><use href="#cR"/></svg><svg><use href="#desk"/></svg><span data-w="31">桌面</span></div><div><svg class="ex"><use href="#cR"/></svg><svg><use href="#win"/></svg><span data-w="111">Windows-SSD (</span></div><div class="cur"><svg class="ex"><use href="#cR"/></svg><svg><use href="#drv"/></svg><span data-w="63">Data (D:)</span></div>
        <i class="peek"></i>
      </div>
      <div class="vs"><svg><use href="#cU"/></svg><i></i><svg><use href="#cD"/></svg></div>
      <div class="files">
        <div class="fh"><span class="n"><span data-w="31">名称</span></span><span class="d"><span data-w="61">修改日期</span><svg><use href="#cD"/></svg></span></div>
        <div class="fr"><svg><use href="#bin"/></svg><span class="n"><span data-w="73">bridge.bin</span></span><span class="d"><span data-w="118">2020/2/19 20:19</span></span></div>
        <div class="fr"><svg class="f"><use href="#fold"/></svg><span class="n"><span data-w="48">cluster</span></span><span class="d"><span data-w="118">2020/6/16 11:02</span></span></div>
        <div class="fr"><svg class="f"><use href="#fold"/></svg><span class="n"><span data-w="83">registration</span></span><span class="d"><span data-w="118">2020/4/18 21:55</span></span></div>
        <div class="hs"><svg><use href="#cL"/></svg><i></i><svg><use href="#cR"/></svg></div>
      </div>
    </div>
    <div class="foot">
      <div class="field"><label data-w="72">文件名(N):</label><div class="inp"><span data-w="108">bridge_pier.bin</span><svg><use href="#cD"/></svg></div></div>
      <div class="field"><label data-w="84">保存类型(T):</label><div class="inp type"><span data-w="214">CloudCompare entities (*.bin)</span><svg><use href="#cD"/></svg></div></div>
      <div class="acts"><svg><use href="#cU"/></svg><span data-w="76">隐藏文件夹</span><div class="btns"><button><span data-w="49">保存(S)</span></button><button><span data-w="30">取消</span></button></div></div>
    </div>
    <svg class="grip" viewBox="0 0 12 12"><path d="M8 0h3v3H8zM4 4h3v3H4zM8 4h3v3H8zM0 8h3v3H0zM4 8h3v3H4zM8 8h3v3H8z" fill="#bcbcbc"/></svg>
  </section>

  <section class="app app-b">
    <header class="app-title"><svg><use href="#cc"/></svg><span data-w="188">CloudCompare v2.11 alpha (Anoia) [64-bit] - [3D View 1]</span>
      <div class="wbtns"><i class="min"></i><i class="bat"></i><svg><use href="#x"/></svg></div></header>
    <nav class="menu"><svg><use href="#cc"/></svg><span data-w="11">File</span><span data-w="12">Edit</span><span data-w="18">Tools</span><span data-w="24">Display</span><span data-w="24">Plugins</span><span data-w="31">3D Views</span><span data-w="16">Help</span><div class="mdi"><i></i><svg><use href="#float"/></svg><svg><use href="#x"/></svg></div></nav>
    <div class="tools" data-icons="open save | gear list plus rain link del | dots3 shield spots gbox garrow garrow seg gccc blob check fmtSor | cut move slab trace || hist curve eq grid pl calc sf || canC canY || kd fm docg docb ball globe || rc rl || sred sgray tri"></div>
    <div class="work">
      <div class="side" data-icons="mon cam one cross auto.on eye cube atom mag b1 b2 b3 b4 b5 b6 bf.in bf.in flick.in"></div>
      <div class="center">
        <div class="upper">
          <div class="dock">
            <div class="dock-head"><span data-w="25">DB Tree</span><svg><use href="#float"/></svg></div>
            <div class="tree">
              <div class="node"><svg class="tw"><use href="#tD"/></svg><svg class="cb"><use href="#tick"/></svg><svg class="fo"><use href="#fol2"/></svg><span data-w="102">bridge_pier.bin (D:/Mengjie⋯</span></div>
              <div class="node child"><div class="sel"><svg class="cb"><use href="#tick"/></svg><span data-w="37">bridge_pier</span></div></div>
            </div>
            <div class="dock-head"><span data-w="35">Properties</span><svg><use href="#float"/></svg></div>
            <div class="props">
              <div class="ptab">
                <div class="prow ph"><span data-w="29">Property</span><span data-w="39">State/Value</span></div>
                <div class="prow pc"><span data-w="34">CC Object</span></div>
                <div class="prow alt"><span data-w="20">Name</span><span data-w="38">bridge_pier</span></div>
                <div class="prow"><span data-w="22">Visible</span><svg class="cb"><use href="#tick"/></svg></div>
                <div class="prow alt"><span data-w="31">Show n...</span><svg class="cb"><use href="#untick"/></svg></div>
                <div class="prow tall"><span data-w="21">Colors</span><div class="combo"><svg><use href="#rgb"/></svg><span data-w="15">RGB</span><svg class="cd"><use href="#tD"/></svg></div></div>
                <div class="prow tri alt"><span data-w="26">Box di...</span><div><p><span data-w="34">X: 3.96092</span></p><p><span data-w="34">Y: 1.21236</span></p><p><span data-w="34">Z: 4.08926</span></p></div></div>
                <div class="prow tri"><span data-w="31">Shifted ...</span><div><p><span data-w="34">X: 12.0475</span></p><p><span data-w="34">Y: 40.8371</span></p><p><span data-w="34">Z: 149.288</span></p></div></div>
                <div class="prow tri alt"><span data-w="29">Global ...</span><div><p><span data-w="42">X: 12.047511</span></p><p><span data-w="42">Y: 40.837070</span></p><p><span data-w="47">Z: 149.287674</span></p></div></div>
              </div>
              <div class="vs"><svg><use href="#cU"/></svg><i></i><svg><use href="#cD"/></svg></div>
            </div>
          </div>
          <div class="view3d"></div>
        </div>
        <div class="console">
          <div class="dock-head"><span data-w="25">Console</span><svg><use href="#float"/></svg><svg><use href="#x"/></svg></div>
          <div class="log">
            <div class="lines"><p><span data-w="183">[18:57:55] [BIN] Version 5.0 (coords: float / scalar: float)</span></p><p class="alt"><span data-w="541">[18:57:56] [I/O] File 'D:/MengjieXu/Science/BDSR2019-2020/document_file/网课+证明/point_cloud/点云1/代码中使用的点云文件/bridge_pier.bin' loaded successfully</span></p></div>
            <div class="vs"><svg><use href="#cU"/></svg><i></i><svg><use href="#cD"/></svg></div>
          </div>
        </div>
      </div>
      <div class="side right" data-icons="no qb qb - film broom comp shd csf nn pz m3 pc gs rgbt ell"></div>
    </div>
  </section>
  <canvas class="pier pier-b" width="184" height="208"></canvas>
  <i class="axis"></i>

  <div class="tip">Save</div>
  <div class="mark m1"></div>
  <div class="mark m2"></div>
  <div class="mark m3"></div>
  <div class="mark m4"></div>
  <svg class="arrows" viewBox="0 0 1856 1013"><g fill="#fb3a3a">
    <path d="M145 103.500L176 109.500 171.500 114.500 194.500 139.500 162 119.500 157 124.500z"/>
    <path d="M113.500 136L117 160 146.500 396 150 394 143.700 411 135 398.500 139 398z"/>
    <path d="M720.500 683.500L1000.500 384.500 996.500 381.500 1013 376.500 1010 394 1006 390.500 720.500 684z"/>
  </g></svg>
  <p class="note n1"><span data-w="240">原始文件是</span><span class="la" data-w="72">PCD</span><span data-w="96">版本</span></p>
  <p class="note n2"><span data-w="432">可以转化的文件格式</span></p>
  <p class="note n3"><span data-w="96">选择</span><span class="la low">bin</span><span data-w="96">格式</span></p>
  <p class="note n4"><span data-w="240">结果文件是</span><span class="la" data-w="72">BIN</span><span data-w="96">版本</span></p>
</main>
<script src="main.js"></script>
</body>
</html>
```
FILE: styles.css
```css
* { box-sizing: border-box; }
body { margin: 0; background: #fff; color: #111; font-family: "Noto Sans", "Noto Sans CJK SC", sans-serif; }
p, ul { margin: 0; padding: 0; list-style: none; }
svg { display: block; flex: none; overflow: visible; }
.paints { position: absolute; width: 0; height: 0; }
.sprite { display: none; }
.stage { position: relative; width: 1856px; height: 1013px; overflow: hidden; background: #fff; }
[data-w] { display: inline-block; white-space: nowrap; flex: none; transform-origin: 0 50%; }

.ic-serif { font-family: "Liberation Serif", serif; font-weight: bold; fill: #222; }
.ic-bold { font-family: "Liberation Sans", sans-serif; font-weight: bold; fill: #1c2430; }
.ic-soft { fill: #555; }
.ic-blue { font-family: "Liberation Sans", sans-serif; font-weight: bold; fill: #2f62b8; }
.ic-grey { font-family: "Liberation Sans", sans-serif; fill: #888; }

/* application windows */
.app { position: absolute; display: flex; flex-direction: column; background: #fff; }
.app-title, .menu, .tools, .work, .upper, .node, .sel, .dock-head, .combo { display: flex; align-items: center; }
.tools { background: #f0f0f0; border-bottom: 1px solid #cfcfcf; flex: none; }
.tools svg { width: var(--u); height: var(--u); }
.tools i { width: calc(var(--u) * .2); height: 80%; border-left: 1px solid #dcdcdc; }
.tools b { width: calc(var(--u) * .37); height: 92%; border-left: 1px solid #d0d0d0; }
.tools b::after { content: ""; display: block; height: 100%; margin-left: 2px; border-left: 1px dotted #bbb; }
.work { flex: 1; align-items: stretch; min-height: 0; }
.side { background: #f0f0f0; display: flex; flex-direction: column; align-items: center; flex: none; }
.side .on { background: #bfdcf3; }
.dock { background: #f0f0f0; display: flex; flex-direction: column; flex: none; }
.dock-head { background: #d9d9d9; border: 1px solid #cdcdcd; font-family: "Liberation Mono", monospace; color: #444; flex: none; justify-content: space-between; }
.tree, .props { background: #fff; border: 1px solid #bcbcbc; flex: none; }
.view3d { flex: 1; background: #fff; }

.app-a { left: 75px; top: 60px; width: 850px; height: 346px; overflow: hidden; --u: 23.45px; --nx: -.4px; --ny: -.3px; border-left: 2px dotted #9cc8ea; }
.app-a .app-title { height: 18px; flex: none; font-size: 13px; }
.app-a .app-title svg { width: 13px; height: 11px; margin: 0 2.500px 0 .5px; }
.app-a .menu { height: 19px; flex: none; gap: 7.300px; font-size: 12.500px; padding-top: 2px; }
.app-a .menu svg { width: 5px; height: 5px; margin: -8px -3px 0 0; }
.app-a .tools { height: 28px; padding-left: 6.500px; }
.app-a .tools .hot { background: #cfe5f5; }
.app-a .side { width: 24px; padding-top: 12px; }
.app-a .side svg { width: 20px; height: 20px; margin-bottom: 5.500px; }
.app-a .side .on { width: 24px; height: 25px; margin: -2.500px 0 3px; }
.app-a .side svg:nth-child(1), .app-a .side svg:nth-child(2) { width: 18px; }
.app-a .dock { width: 213px; padding-left: 1px; border-left: 1px solid #d4d4d4; }
.app-a .dock-head { height: 17px; width: 209px; padding: 0 2px; font-size: 10.500px; }
.app-a .dock-head svg { width: 5px; height: 5px; }
.app-a .tree { margin: 10px 0 13px 6px; width: 195px; height: 238px; }
.app-a .node { height: 17px; font: 10.500px "Liberation Mono", monospace; color: #555; }
.app-a .tw { width: 6px; height: 6px; margin: 0 6px; color: #444; }
.app-a .cb { width: 11px; height: 11px; margin-right: 3px; }
.app-a .fo { width: 9px; height: 10px; margin-right: 4px; }
.app-a .path { margin-left: 11px; }
.app-a .child { padding-left: 16px; }
.app-a .child .tw { margin-right: 7px; }
.app-a .sel { height: 16px; flex: 1; background: #cce8ff; border: 1px solid #99c9ef; font: 12.500px "Noto Sans", sans-serif; color: #111; }
.app-a .sel .fo { margin-right: 2px; }

.app-b { left: 1034px; top: 509px; width: 747px; height: 479px; --u: 16.07px; --ny: -.5px; }
.app-b .app-title { height: 14px; flex: none; font-size: 9.200px; color: #8a8a8a; }
.app-b .app-title > svg { width: 9px; height: 8px; margin: 0 2px 0 1px; }
.wbtns { margin-left: auto; display: flex; align-items: center; padding-right: 11px; color: #777; }
.wbtns svg { width: 6px; height: 6px; }
.min { width: 6px; border-top: 1px solid #888; margin-right: 16px; }
.bat { width: 29px; height: 6px; border: 1px solid #666; border-radius: 3px; margin: -6px 3px 0 0; background: linear-gradient(90deg, #31a35c 40%, #fff 40%); }
.app-b .menu { height: 12px; flex: none; gap: 5px; font-size: 8.500px; color: #8a8a8a; }
.app-b .menu > svg { width: 4px; height: 4px; margin: -5px -2px 0 0; }
.mdi { margin-left: auto; display: flex; gap: 2.500px; align-items: center; padding-right: 1px; color: #555; }
.mdi i { width: 2px; height: 1px; background: #777; }
.mdi svg { width: 3px; height: 3px; }
.app-b .tools { height: 19px; padding-left: 4.500px; }
.app-b .side { width: 17px; padding-top: 5px; border-bottom: 1px solid #ccc; margin-bottom: 11px; }
.app-b .side svg { width: 14px; height: 14px; margin: 1.540px 0; }
.app-b .side .on { width: 17px; height: 17.080px; margin: 0; }
.app-b .side .in { width: 10px; }
.app-b .work { background: #f0f0f0; }
.app-b .right { width: 18px; }
.app-b .right hr { width: 16px; margin: 3px 0; border: 0; border-top: 1px solid #ccc; height: 1px; }
.center { flex: 1; display: flex; flex-direction: column; border-left: 1px solid #d4d4d4; }
.upper { height: 367px; align-items: stretch; }
.app-b .dock { width: 146px; }
.app-b .dock-head { height: 12px; width: 145px; padding: 0 1px; font-size: 7.200px; }
.app-b .dock-head svg { width: 3px; height: 3px; }
.app-b .tree { margin: 6px 0 8px 5px; width: 134px; height: 160px; overflow: hidden; }
.app-b .node { height: 12px; font: 7.500px "Liberation Mono", monospace; color: #555; }
.app-b .tw { width: 4px; height: 4px; margin: 0 6px 0 3px; }
.app-b .cb { width: 8px; height: 8px; margin-right: 2px; }
.app-b .fo { width: 6px; height: 7px; margin-right: 2px; }
.app-b .child { padding-left: 23px; }
.app-b .sel { flex: 1; height: 10px; background: #dcdcdc; font: 8px "Noto Sans", sans-serif; color: #111; }
.app-b .sel .cb { margin-right: 8px; }
.app-b .props { display: flex; margin: 6px 0 0 5px; width: 134px; height: 159px; font-size: 8.200px; overflow: hidden; --ny: -1px; }
.ptab { flex: 1; }
.prow { display: grid; align-items: center; justify-items: start; }
.app-b .prow { grid-template-columns: 34px 1fr; height: 10.200px; padding-left: 1px; line-height: 10px; }
.app-b .prow.ph { height: 15px; padding-left: 2px; }
.app-b .prow.pc { height: 10.500px; }
.pc { background: #a3a3a3; color: #fff; }
.alt { background: #f4f4f4; }
.app-b .prow.tall { height: 12px; }
.combo { justify-self: stretch; }
.app-b .combo { background: #e3e3e3; height: 12px; padding-left: 2px; gap: 3px; margin-left: -1px; }
.app-b .combo svg { width: 7px; height: 8px; }
.app-b .combo .cd { width: 3px; height: 3px; margin: 0 2px 0 auto; }
.app-b .prow.tri { height: 30px; }
.app-b .tri p { height: 9.800px; line-height: 9.800px; }
.vs { background: #f0f0f0; display: flex; flex-direction: column; align-items: center; color: #555; flex: none; }
.vs i { background: #cdcdcd; width: 100%; }
.app-b .vs { width: 9px; padding: 3px 0; justify-content: space-between; }
.app-b .vs svg { width: 4px; height: 4px; }
.app-b .props .vs i { height: 72px; margin: 4px 0 64px; }
.console { padding-top: 3px; }
.console .dock-head { width: 711px; font-size: 7.200px; }
.console .dock-head svg { margin-left: auto; }
.console .dock-head svg + svg { margin: 0 2px 0 4px; }
.log { display: flex; margin: 6px 0 0 5px; width: 701px; height: 30px; background: #fff; border: 1px solid #bcbcbc; font-size: 8px; }
.lines { flex: 1; }
.lines p { height: 10.700px; line-height: 10.700px; padding-left: 1px; }
.app-b .log .vs i { height: 5px; }

/* lower strip of the main window, left of the format list */
.lower { position: absolute; left: 34px; top: 749px; width: 134px; height: 136px; overflow: hidden; display: flex; background: #f0f0f0; font-size: 13px; --nx: -.5px; --ny: -.6px; }
.lower .side { width: 25px; border-right: 1px solid #d4d4d4; margin-right: 1px; }
.lower .side svg { width: 22px; height: 22px; margin: 0 0 4px -8px; }
.lower .side svg:nth-child(n+5) { width: 17px; }
.lower .dock-head { height: 4px; width: 120px; }
.lower .props { margin: 9px 0 0 9px; width: 200px; border-top-color: #bbb; }
.lower .prow { grid-template-columns: 63px 1fr; height: 16px; padding-left: 1.500px; }
.lower .prow.ph { height: 24px; padding-left: 4px; }
.lower .prow.pc { padding-left: 0; }
.lower .prow.tall { height: 18px; }
.lower .cb { width: 15px; height: 13px; }
.lower .combo { background: #e6e6e6; border: 1px solid #ccc; height: 18px; padding-left: 4px; gap: 4px; margin-left: -1px; }
.lower .combo svg { width: 13px; height: 13px; }

/* save dialogs */
.dialog { position: absolute; background: #fff; display: flex; flex-direction: column; }
.dt, .nav, .nb, .addr, .refresh, .search, .cmd, .org, .field, .inp, .acts, .fr, .fh, .fh .d, .places > div, .hs { display: flex; align-items: center; }
.nb, .refresh { justify-content: center; }
.nb { color: #777; }
.dim { color: #d5d5d5; }
.dt .close { margin-left: auto; }
.addr, .search, .refresh { border: 1px solid #e2e2e2; }
.refresh { border-left: 0; }
.addr .s { width: 7px; height: 8px; color: #555; }
.addr .drop { margin-left: auto; width: 10px; }
.search { color: #6a6a6a; justify-content: space-between; }
.qq { color: #666; }
.cmd { background: #f5f6f7; border-bottom: 1px solid #e9eaeb; color: #2b4260; }
.cmd svg { color: #223a5c; }
.help { display: block; border-radius: 50%; background: #0a66c8; color: #fff; text-align: center; }
.vw { margin-left: auto; }
.body { display: flex; }
.cur { background: #d9d9d9; }
.peek { display: block; border-radius: 50% 50% 0 0; background: #5aa2c8; }
.files { display: flex; flex-direction: column; }
.fh { color: #4a617f; align-items: flex-start; }
.fh .d { border-left: 1px solid #e5e5e5; color: #4a617f; }
.fh .d svg { color: #888; align-self: flex-start; }
.fr .d { color: #6a6a6a; }
.hs { background: #f0f0f0; justify-content: space-between; margin-top: auto; color: #444; }
.hs i { background: #cdcdcd; height: 100%; }
.foot { background: #f0f0f0; flex: 1; }
.field { justify-content: flex-end; }
.inp { background: #fff; border: 1px solid #a5a5a5; justify-content: space-between; }
.inp svg { color: #666; }
button { font: inherit; color: #111; background: #e1e1e1; border: 1px solid #b5b5b5; padding: 0; }

.d1 { left: 34px; top: 406px; width: 667px; height: 344px; font-size: 13px; --nx: -.3px; --ny: -.6px; }
.d1 .dt { height: 26px; padding: 0 10px 0 7px; }
.d1 .logo { width: 16px; height: 13px; margin-right: 4px; }
.d1 .close { width: 11px; height: 11px; color: #222; }
.d1 .nav { height: 33px; padding-left: 4px; }
.d1 .nb { width: 32px; }
.d1 .nb svg { width: 13px; height: 10px; }
.d1 .nb .s { width: 8px; height: 8px; }
.d1 .nb .u { width: 11px; height: 12px; }
.d1 .nv { width: 20px; }
.d1 .nu { width: 26px; }
.d1 .addr { width: 300px; height: 22px; padding: 0 4px; }
.d1 .fold { width: 10px; height: 13px; }
.d1 .qq { margin: -3px 7px 0 13px; font-size: 9px; }
.d1 .addr .s { margin: 0 9px 0 9.500px; }
.d1 .addr .drop { margin: 0 0 0 auto; }
.d1 .refresh { width: 20px; height: 22px; margin-right: 6px; }
.d1 .refresh svg { width: 11px; height: 12px; }
.d1 .search { width: 223px; height: 22px; padding: 0 6px 0 7px; }
.d1 .search svg { width: 13px; height: 12px; }
.d1 .cmd { height: 30px; padding: 0 14.500px 0 18px; color: #2b4260; }
.d1 .org svg, .d1 .vd { width: 5px; height: 5px; margin-left: 4px; }
.d1 .newf { margin-left: 32px; }
.d1 .vw { width: 16px; height: 13px; }
.d1 .vd { margin: 0 31px 0 10px; }
.d1 .help { width: 16.500px; height: 15px; line-height: 15px; font-size: 11.500px; }
.d1 .body { height: 130px; }
.d1 .places { width: 152px; overflow: hidden; }
.d1 .places > div { height: 23px; padding-left: 35px; }
.d1 .places > div svg { width: 16px; height: 14px; margin-right: 3px; }
.d1 .cur { width: 151px; }
.d1 .peek { width: 8px; height: 2px; margin: 13px 0 0 32px; }
.d1 .vs { width: 17px; margin-right: 4px; padding-top: 5px; }
.d1 .vs svg { width: 8px; height: 8px; }
.d1 .vs i { height: 19px; margin: 77px 0 9px; }
.d1 .files { width: 494px; }
.d1 .fh { height: 31px; padding-left: 20.500px; }
.d1 .fh .n { margin-top: 4px; width: 26px; }
.d1 .fh .d { margin-left: 288.500px; width: 150px; height: 25px; padding-left: 7.500px; }
.d1 .fh .d svg { width: 8px; height: 7px; margin-left: 25px; }
.d1 .fr { height: 20.300px; padding-left: 21px; }
.d1 .fr svg { width: 17px; height: 14px; margin-right: 5px; }
.d1 .fr .f { width: 10px; height: 13px; margin: 0 9px 0 3px; }
.d1 .fr .n { width: 301px; }
.d1 .hs { height: 16px; padding: 0 3px 0 6px; }
.d1 .hs svg { width: 7px; height: 7px; }
.d1 .hs i { width: 295px; margin: 0 auto 0 7px; }
.d1 .foot { padding-top: 11px; border-bottom: 1px solid #c4c4c4; }
.d1 .field { height: 19px; padding-right: 3px; margin-bottom: 2px; }
.d1 .inp { width: 528px; height: 19px; margin-left: 6px; padding: 0 4px 0 1.500px; }
.d1 .inp svg { width: 9px; height: 8px; }
.d1 .type { background: #cce4f7; border-color: #6fa8dc; }
.d1 .acts { margin-top: 42px; padding-left: 9px; gap: 6px; }
.d1 .acts svg { width: 9px; height: 9px; }

.types { position: absolute; left: 168px; top: 675px; width: 531px; height: 210px; overflow: hidden; background: #fff; border: 1px solid #5b7f94; border-width: 1px 1px 0; padding: 1px 0 0 2px; font-size: 13px; line-height: 14.950px; --ny: -.8px; }
.types li { height: 14.950px; padding-left: 1px; }
.types .cur { background: #0078d7; color: #fff; margin-left: -2px; padding-left: 3px; }

.d2 { left: 1027px; top: 4px; width: 777px; height: 479px; border: 1px solid #a9a9a9; font-size: 15.500px; --nx: -.2px; --ny: -.2px; }
.d2 .dt { height: 38px; padding: 0 15px 0 10px; color: #777; font-size: 15px; }
.d2 .logo { width: 18px; height: 16px; margin-right: 4px; }
.d2 .close { width: 13px; height: 13px; color: #888; }
.d2 .nav { height: 44px; padding-left: 6px; }
.d2 .nb { width: 37px; }
.d2 .nb svg { width: 14px; height: 12px; }
.d2 .nb .s { width: 9px; height: 9px; }
.d2 .nb .u { width: 12px; height: 14px; }
.d2 .nv { width: 22.500px; }
.d2 .nu { width: 30.500px; }
.d2 .addr { width: 345px; height: 30px; padding: 0 5px 0 4px; }
.d2 .fold { width: 11px; height: 17px; }
.d2 .qq { margin: -4px 9px 0 15px; font-size: 11px; }
.d2 .addr .s { margin: 0 9px 0 10px; }
.d2 .addr .drop { margin: 0 0 0 auto; width: 11px; height: 11px; }
.d2 .refresh { width: 24px; height: 30px; margin-right: 8px; }
.d2 .refresh svg { width: 13px; height: 14px; }
.d2 .search { width: 257px; height: 30px; padding: 0 7px; }
.d2 .search svg { width: 15px; height: 15px; }
.d2 .cmd { height: 42px; padding: 0 20px 0 4px; }
.d2 .org { width: 78px; height: 35px; background: #ddebf5; border: 1px solid #92cce8; padding-left: 18px; }
.d2 .org svg, .d2 .vd { width: 6px; height: 6px; margin-left: 4px; }
.d2 .newf { margin-left: 18.500px; }
.d2 .vw { width: 18px; height: 18px; }
.d2 .vd { margin: 0 36px 0 11px; }
.d2 .help { width: 19px; height: 20px; line-height: 20px; font-size: 14px; }
.d2 .body { height: 180px; }
.d2 .places { width: 177px; overflow: hidden; }
.d2 .places > div { height: 32px; padding-left: 20px; }
.d2 .places > div svg { width: 18px; height: 18px; margin-right: 4px; }
.d2 .places > div .ex { width: 11px; height: 13px; margin-right: 11.500px; color: #ddd; }
.d2 .cur { width: 176px; }
.d2 .peek { width: 8px; height: 3px; margin: 17px 0 0 38px; }
.d2 .vs { width: 20px; margin-right: 4px; padding-top: 8px; }
.d2 .vs svg { width: 8px; height: 9px; }
.d2 .vs i { height: 26px; margin: 107px 0 15px; }
.d2 .files { width: 574px; }
.d2 .fh { height: 43px; padding-left: 23px; }
.d2 .fh .n { margin-top: 6px; width: 31px; }
.d2 .fh .d { margin-left: 334px; width: 150px; height: 34px; padding-left: 7.500px; }
.d2 .fh .d svg { width: 9px; height: 8px; margin-left: 29px; }
.d2 .fr { height: 28px; padding-left: 24px; }
.d2 .fr svg { width: 20px; height: 18px; margin-right: 6px; }
.d2 .fr .f { width: 11px; height: 17px; margin: 0 12px 0 3px; }
.d2 .fr .n { width: 346.500px; }
.d2 .hs { height: 23px; padding: 0 8px; }
.d2 .hs svg { width: 8px; height: 9px; }
.d2 .hs i { width: 340px; margin: 0 auto 0 8px; }
.d2 .foot { padding-top: 15px; }
.d2 .field { height: 26px; padding-right: 7px; margin-bottom: 3px; }
.d2 .inp { width: 610px; height: 26px; margin-left: 6px; padding: 0 5px 0 2px; }
.d2 .inp svg { width: 9px; height: 9px; }
.d2 .type { background: #e1e2e2; border-color: #b5b5b5; }
.d2 .acts { margin-top: 51.500px; padding-left: 12px; gap: 7px; }
.d2 .acts > svg { width: 10px; height: 10px; margin-top: 8px; }
.d2 .acts > span { margin-top: 8px; }
.btns { display: flex; gap: 16px; margin-left: auto; padding-right: 23px; }
.btns button { width: 111px; height: 34px; }
.grip { position: absolute; right: 3px; bottom: 3px; width: 11px; height: 12px; }

/* point clouds and overlays */
.pier { position: absolute; }
.pier-a { left: 603px; top: 255px; }
.pier-b { left: 1389px; top: 633px; }
.axis { position: absolute; left: 1752px; top: 904px; width: 8px; height: 9px; border-left: 1px solid #3ab4dc; border-bottom: 1px solid #f33; }
.tip { position: absolute; left: 119px; top: 118px; width: 29px; height: 18px; background: #fff; border: 1px solid #999; color: #666; font-size: 11.500px; line-height: 17px; text-align: center; }
.mark { position: absolute; border: 7px solid #000; }
.m1 { left: 97px; top: 89px; width: 37px; height: 37px; }
.m2 { left: 145px; top: 143px; width: 96px; height: 35px; }
.m3 { left: 1064px; top: 562px; width: 92px; height: 29px; }
.m4 { left: 166px; top: 674px; width: 328px; height: 211px; border-width: 3px; }
.arrows { position: absolute; left: 0; top: 0; width: 1856px; height: 1013px; }
.note { position: absolute; display: flex; align-items: baseline; height: 60px; line-height: 60px; font-family: "Noto Serif CJK SC", "Noto Sans CJK SC", sans-serif; font-weight: 300; font-size: 47px; color: #000; white-space: nowrap; }
.note .la { font-family: "Liberation Serif", serif; font-size: 49px; }
.note .low { font-size: 47px; letter-spacing: 3px; width: 71px; padding-left: 1px; }
.n1 { left: 331px; top: 142px; }
.n2 { left: 511px; top: 740px; }
.n3 { left: 1154px; top: 405px; }
.n4 { left: 1193px; top: 562px; }
```
FILE: main.js
```js
// Build the tool strips: names are sprite symbols, "|" and "||" are separators,
// "-" is a rule, and "name.cls" adds a class.
document.querySelectorAll('[data-icons]').forEach(function (bar) {
  bar.innerHTML = bar.dataset.icons.split(' ').map(function (t) {
    if (t === '|') return '<i></i>';
    if (t === '||') return '<b></b>';
    if (t === '-') return '<hr>';
    var p = t.split('.');
    return '<svg class="' + (p[1] || '') + '"><use href="#' + p[0] + '"/></svg>';
  }).join('');
});

// Condense or widen each label to the width it has in its window.
document.querySelectorAll('[data-w]').forEach(function (el) {
  var want = parseFloat(el.dataset.w), w = el.offsetWidth;
  if (!w) return;
  el.style.width = w + 'px';
  el.style.transform = 'translate(var(--nx, 0px), var(--ny, 0px)) scaleX(' + want / w + ')';
  el.style.marginRight = (want - w) + 'px';
});

// Seeded generator so the point clouds are the same on every load.
function rng(seed) {
  return function () { seed = (seed * 1664525 + 1013904223) >>> 0; return seed / 4294967296; };
}

var SHADES = [
  [[66, 38, 36], [74, 48, 42], [104, 92, 84]],
  [[92, 68, 46], [96, 76, 62], [104, 88, 84]],
  [[92, 70, 50], [88, 70, 62], [86, 68, 74]],
  [[72, 56, 54], [72, 52, 60], [70, 50, 62]]
];
function shade(u, v) {
  var x = u * 2, y = v * 3, i = Math.min(1, x | 0), j = Math.min(2, y | 0), fx = x - i, fy = y - j;
  return [0, 1, 2].map(function (k) {
    return (SHADES[j][i][k] * (1 - fx) + SHADES[j][i + 1][k] * fx) * (1 - fy) +
           (SHADES[j + 1][i][k] * (1 - fx) + SHADES[j + 1][i + 1][k] * fx) * fy;
  });
}

// q: corners of the front face (tl, tr, br, bl); wires: bounding-box polylines.
function pier(sel, q, wires, pitch) {
  var c = document.querySelector(sel), g = c.getContext('2d'), r = rng(7);
  var W = c.width, H = c.height;
  function line(p) {
    g.beginPath();
    p.forEach(function (a, i) { i ? g.lineTo(a[0], a[1]) : g.moveTo(a[0], a[1]); });
    g.strokeStyle = 'rgba(248,248,90,.8)'; g.lineWidth = 1; g.stroke();
  }
  line(wires[0]);
  for (var y = 0; y < H; y++) {
    for (var x = 0; x < W; x++) {
      var t = (x - q[0][0]) / (q[1][0] - q[0][0]);
      var top = q[0][1] + t * (q[1][1] - q[0][1]) + (r() - .5) * 2;
      var bot = q[3][1] + t * (q[2][1] - q[3][1]) + (r() - .5) * 2;
      if (y < top || y > bot) continue;
      var v = (y - top) / (bot - top);
      var l = q[0][0] + v * (q[3][0] - q[0][0]) + (r() - .5) * 2;
      var rt = q[1][0] + v * (q[2][0] - q[1][0]) + (r() - .5) * 2;
      if (x < l || x > rt) continue;
      var u = (x - l) / (rt - l), s = shade(u, v), n = (r() - .5) * 24;
      if (Math.round(x % pitch) === 0) n += 9;
      if (Math.round(y % pitch) === 0) n += 8;
      if (r() < .05) n += 70 * r();
      if (u < .1 && Math.round(x % 4) === 0 && (y % 3) === 0 && r() < .7) n += 120;
      if (u > .962) n += 20 + 75 * r() * (1 - v * .4);
      if (v < .035) n -= 12 - (r() < .12 ? 120 : 0);
      g.fillStyle = 'rgb(' + s.map(function (k) { return Math.max(0, Math.min(255, k + n)) | 0; }) + ')';
      g.fillRect(x, y, 1, 1);
    }
  }
  wires.slice(1).forEach(line);
}

pier('.pier-a', [[5, 3], [240, 12], [205, 284], [35, 278]], [
  [[10, 3], [243, 8.5], [241, 273], [8, 268], [10, 3]],
  [[3, 13], [238, 19], [235, 286], [1.5, 281], [3, 13]],
  [[3, 13], [10, 3]], [[238, 19], [243, 8.5]], [[235, 286], [241, 273]]
], 3.2);
pier('.pier-b', [[6, 3], [179, 10], [152, 205], [28, 200]], [
  [[9, 3], [181.5, 6.5], [180, 199], [7, 195], [9, 3]],
  [[3, 11], [178, 13.5], [175.5, 206], [2.5, 203], [3, 11]],
  [[3, 11], [9, 3]], [[178, 13.5], [181.5, 6.5]], [[175.5, 206], [180, 199]], [[2.5, 203], [7, 195]]
], 2.6);
```
